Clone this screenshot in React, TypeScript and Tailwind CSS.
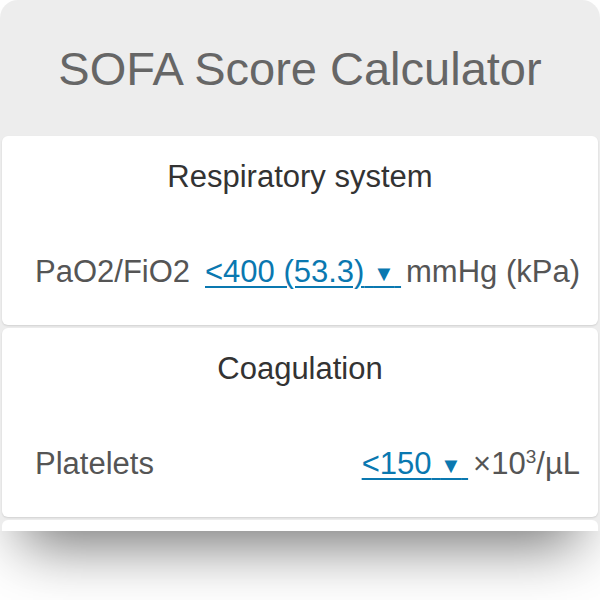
import React from 'react';

const FONT = { fontFamily: '"Liberation Sans", Arial, sans-serif' };

function Select({ value }: { value: string }) {
  return (
    <span className="text-[#0a78b0] underline decoration-[2px] underline-offset-[4px] whitespace-pre cursor-pointer">
      {value} <span className="text-[22px] leading-none align-[1px]">▼</span>
      {'\u2009'}
    </span>
  );
}

function Section({
  title,
  label,
  select,
  unit,
}: {
  title: string;
  label: string;
  select: string;
  unit: React.ReactNode;
}) {
  return (
    <div className="bg-white rounded-md shadow-[0_1px_2px_rgba(0,0,0,0.12)] pt-[22px] pb-[35px] pl-[33px] pr-[18px]">
      <h2 className="text-center text-[31px] leading-[37px] text-[#333] pr-[15px]">{title}</h2>
      <div className="mt-[58px] h-[37px] flex items-center justify-between text-[31px] leading-[37px] text-[#555]">
        <span>{label}</span>
        <span className="flex items-center gap-[5px]">
          <Select value={select} />
          <span>{unit}</span>
        </span>
      </div>
    </div>
  );
}

export default function App() {
  return (
    <div className="w-[600px] h-[600px] bg-white" style={FONT}>
      <div className="h-[531px] overflow-hidden bg-[#ededed] rounded-t-[18px] shadow-[0_36px_56px_-22px_rgba(0,0,0,0.55)]">
        {/* Header */}
        <div className="h-[136px] flex items-center justify-center">
          <h1 className="text-[47px] text-[#666] leading-none">SOFA Score Calculator</h1>
        </div>

        <div className="px-[2px] flex flex-col gap-[3px]">
          <Section
            title="Respiratory system"
            label="PaO2/FiO2"
            select="<400 (53.3)"
            unit="mmHg (kPa)"
          />
          <Section
            title="Coagulation"
            label="Platelets"
            select="<150"
            unit={
              <>
                ×10<sup className="text-[19px] -top-[0.6em]">3</sup>/µL
              </>
            }
          />
          <div className="bg-white rounded-md h-[80px]" />
        </div>
      </div>
    </div>
  );
}
